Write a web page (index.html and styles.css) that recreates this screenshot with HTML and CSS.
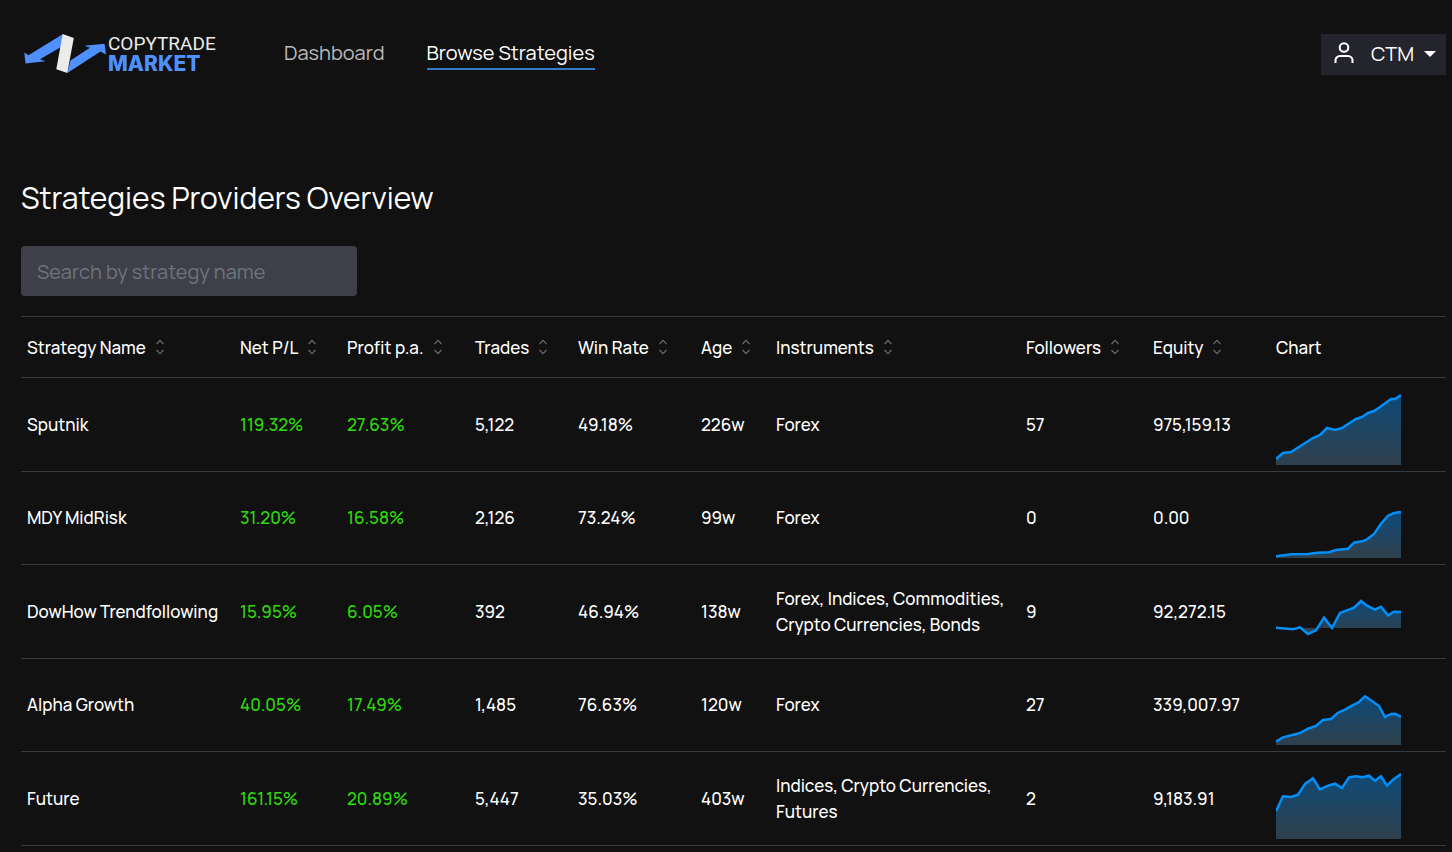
FILE: index.html
```
<!DOCTYPE html>
<html lang="en">
<head>
    <meta charset="UTF-8">
    <meta name="viewport" content="width=device-width, initial-scale=1.0">
    <title>Copytrade Market - Browse Strategies</title>
    <link rel="stylesheet" href="styles.css">
</head>
<body>
    <!-- shared icons and chart gradient -->
    <svg class="defs" width="0" height="0" aria-hidden="true">
        <defs>
            <linearGradient id="fill" x1="0" y1="0" x2="0" y2="1">
                <stop offset="0" stop-color="#0e4a78"/>
                <stop offset="1" stop-color="#30404c"/>
            </linearGradient>
            <symbol id="sort" viewBox="0 0 10 16">
                <path d="M1.5 5 5 1.3 8.5 5M1.5 11 5 14.7 8.5 11" fill="none" stroke="#6b6b6b" stroke-width="1.2"/>
            </symbol>
        </defs>
    </svg>

    <header class="header">
        <a class="logo" href="#">
            <svg class="logo-mark" width="82" height="40" viewBox="0 0 82 40" aria-hidden="true">
                <path d="M39 0 4.500 21.300 0.300 18.500 1.500 29.500 21.500 27.200 16 25.200 37 13Z" fill="#4d90fe"/>
                <path d="M43.300 39 46.500 26.500 66 13.700 60.500 11.800 80.500 9.800 82 20.500 76.500 17.600Z" fill="#4d90fe"/>
                <path d="M38.700 0 49.800 4 43.300 39 32.300 35.300Z" fill="#ebebeb"/>
            </svg>
            <span class="logo-text">
                <span class="logo-top">COPYTRADE</span>
                <span class="logo-bottom">MARKET</span>
            </span>
        </a>
        <nav class="nav">
            <a href="#">Dashboard</a>
            <a href="#" class="active">Browse Strategies</a>
        </nav>
        <button class="user-menu" type="button">
            <svg width="22" height="24" viewBox="0 0 22 24" fill="none" stroke="#fff" stroke-width="2" aria-hidden="true">
                <circle cx="11" cy="5.500" r="4.300"/>
                <path d="M2.500 21v-2.500a4.500 4.500 0 0 1 4.500-4.500h8a4.500 4.500 0 0 1 4.500 4.500V21"/>
            </svg>
            <span>CTM</span>
            <svg width="12" height="6" viewBox="0 0 12 6" aria-hidden="true"><path d="M0 0h12L6 6Z" fill="#fff"/></svg>
        </button>
    </header>

    <main class="content">
        <h1>Strategies Providers Overview</h1>
        <input class="search" type="text" placeholder="Search by strategy name" aria-label="Search by strategy name">

        <table class="strategies">
            <colgroup>
                <col class="col-name">
                <col class="col-net">
                <col class="col-profit">
                <col class="col-trades">
                <col class="col-win">
                <col class="col-age">
                <col class="col-instruments">
                <col class="col-followers">
                <col class="col-equity">
                <col>
            </colgroup>
            <thead>
                <tr>
                    <th><button type="button">Strategy Name<svg><use href="#sort"/></svg></button></th>
                    <th><button type="button">Net P/L<svg><use href="#sort"/></svg></button></th>
                    <th><button type="button">Profit p.a.<svg><use href="#sort"/></svg></button></th>
                    <th><button type="button">Trades<svg><use href="#sort"/></svg></button></th>
                    <th><button type="button">Win Rate<svg><use href="#sort"/></svg></button></th>
                    <th><button type="button">Age<svg><use href="#sort"/></svg></button></th>
                    <th><button type="button">Instruments<svg><use href="#sort"/></svg></button></th>
                    <th><button type="button">Followers<svg><use href="#sort"/></svg></button></th>
                    <th><button type="button">Equity<svg><use href="#sort"/></svg></button></th>
                    <th>Chart</th>
                </tr>
            </thead>
            <tbody>
                <tr>
                    <td>Sputnik</td>
                    <td class="up">119.32%</td>
                    <td class="up">27.63%</td>
                    <td>5,122</td>
                    <td>49.18%</td>
                    <td>226w</td>
                    <td>Forex</td>
                    <td>57</td>
                    <td>975,159.13</td>
                    <td>
                        <svg class="chart" viewBox="0 0 125 80">
                            <path class="area" d="M0 74 7 68 15 67 37 53 44 50 51 43 59 45 66 43 80 34 86 32 92 28 98 26 104 22 115 14 119 14 125 10V80H0Z"/>
                            <polyline points="0,74 7,68 15,67 37,53 44,50 51,43 59,45 66,43 80,34 86,32 92,28 98,26 104,22 115,14 119,14 125,10"/>
                        </svg>
                    </td>
                </tr>
                <tr>
                    <td>MDY MidRisk</td>
                    <td class="up">31.20%</td>
                    <td class="up">16.58%</td>
                    <td>2,126</td>
                    <td>73.24%</td>
                    <td>99w</td>
                    <td>Forex</td>
                    <td>0</td>
                    <td>0.00</td>
                    <td>
                        <svg class="chart" viewBox="0 0 125 80">
                            <path class="area" d="M0 78.300 15 76.200 32 76 42 74.700 53 74.300 60 72 72 70.700 78 64.700 86 63.300 91 61.300 98 56 105 45.700 112 37.700 118 35 125 34V80H0Z"/>
                            <polyline points="0,78.3 15,76.2 32,76 42,74.7 53,74.3 60,72 72,70.7 78,64.7 86,63.3 91,61.3 98,56 105,45.7 112,37.7 118,35 125,34"/>
                        </svg>
                    </td>
                </tr>
                <tr>
                    <td>DowHow Trendfollowing</td>
                    <td class="up">15.95%</td>
                    <td class="up">6.05%</td>
                    <td>392</td>
                    <td>46.94%</td>
                    <td>138w</td>
                    <td>Forex, Indices, Commodities, Crypto Currencies, Bonds</td>
                    <td>9</td>
                    <td>92,272.15</td>
                    <td>
                        <svg class="chart" viewBox="0 0 125 80">
                            <path class="area" d="M0 55.700 17 57.300 24 55.300 32 62 40 58.300 48 45.700 56 56 64 41 71 38.300 78 35.700 85 29 91 33.700 99 37.700 105 34.700 112 43.300 118 39.700 125 40V56H0Z"/>
                            <polyline points="0,55.7 17,57.3 24,55.3 32,62 40,58.3 48,45.7 56,56 64,41 71,38.3 78,35.7 85,29 91,33.7 99,37.7 105,34.7 112,43.3 118,39.7 125,40"/>
                        </svg>
                    </td>
                </tr>
                <tr>
                    <td>Alpha Growth</td>
                    <td class="up">40.05%</td>
                    <td class="up">17.49%</td>
                    <td>1,485</td>
                    <td>76.63%</td>
                    <td>120w</td>
                    <td>Forex</td>
                    <td>27</td>
                    <td>339,007.97</td>
                    <td>
                        <svg class="chart" viewBox="0 0 125 80">
                            <path class="area" d="M0 76.700 7 72.300 24 68 32 63.700 40 61 47 55 55 54 62 47.700 69 44.700 76 40.700 83 37 89 31.300 96 36 103 41 109 52 115 49 119 48.700 125 51.700V80H0Z"/>
                            <polyline points="0,76.7 7,72.3 24,68 32,63.7 40,61 47,55 55,54 62,47.7 69,44.7 76,40.7 83,37 89,31.3 96,36 103,41 109,52 115,49 119,48.7 125,51.7"/>
                        </svg>
                    </td>
                </tr>
                <tr>
                    <td>Future</td>
                    <td class="up">161.15%</td>
                    <td class="up">20.89%</td>
                    <td>5,447</td>
                    <td>35.03%</td>
                    <td>403w</td>
                    <td>Indices, Crypto Currencies, Futures</td>
                    <td>2</td>
                    <td>9,183.91</td>
                    <td>
                        <svg class="chart" viewBox="0 0 125 80">
                            <path class="area" d="M0 52.300 7 37.300 15 38 22 35.700 29 25 37 19.300 44 30.300 52 26.700 59 24.700 66 29 73 18.300 80 17.300 87 18.300 93 16.700 99 21.700 105 17.300 111 26.700 117 20.700 125 15V80H0Z"/>
                            <polyline points="0,52.3 7,37.3 15,38 22,35.7 29,25 37,19.3 44,30.3 52,26.7 59,24.7 66,29 73,18.3 80,17.3 87,18.3 93,16.7 99,21.7 105,17.3 111,26.7 117,20.7 125,15"/>
                        </svg>
                    </td>
                </tr>
            </tbody>
        </table>
    </main>
</body>
</html>
```
FILE: styles.css
```
* {
    box-sizing: border-box;
}
body {
    margin: 0;
    background-color: #111;
    color: #fff;
    font-family: Manrope, Inter, sans-serif;
    font-size: 17px;
    line-height: 26px;
}
button, input {
    font: inherit;
    color: inherit;
    border: none;
}
button {
    background: none;
    cursor: pointer;
}
.defs {
    position: absolute;
}
.header {
    display: flex;
    align-items: center;
    height: 108px;
    padding: 0 6px 0 24px;
}
.logo {
    display: flex;
    align-items: center;
    gap: 2px;
    width: 260px;
    color: #ebebeb;
    text-decoration: none;
}
.logo-text {
    display: flex;
    flex-direction: column;
    font-family: Roboto, sans-serif;
    font-size: 19px;
    line-height: 20px;
}
.logo-bottom {
    color: #4d90fe;
    font-family: Inter, sans-serif;
    font-size: 21px;
    font-weight: 800;
}
.nav {
    display: flex;
    gap: 42px;
    font-size: 20px;
}
.nav a {
    padding: 2px 0;
    border-bottom: 2px solid transparent;
    color: #bbb;
    text-decoration: none;
}
.nav a.active {
    color: #fff;
    border-color: #3478c9;
}
.user-menu {
    display: flex;
    align-items: center;
    gap: 10px;
    height: 41px;
    margin-left: auto;
    padding: 0 10px 0 12px;
    background-color: #24242d;
    font-size: 20px;
}
.user-menu span {
    padding-left: 6px;
}
.content {
    padding: 70px 6px 0 21px;
}
h1 {
    margin: 0 0 28px;
    font-size: 30px;
    line-height: 40px;
    font-weight: 400;
}
.search {
    display: block;
    width: 336px;
    height: 50px;
    margin-bottom: 20px;
    padding: 0 16px;
    border-radius: 4px;
    background-color: #3f3f49;
    font-size: 20px;
}
.search::placeholder {
    color: #6c757d;
    opacity: 1;
}
.strategies {
    width: 100%;
    table-layout: fixed;
    border-spacing: 0;
    border-top: 1px solid #373b3e;
}
.strategies th,
.strategies td {
    padding: 0 6px;
    border-bottom: 1px solid #373b3e;
    text-align: left;
    vertical-align: middle;
    font-weight: 500;
}
.strategies th {
    height: 61px;
    padding-top: 2px;
    white-space: nowrap;
}
.strategies th button {
    display: flex;
    align-items: center;
    gap: 9px;
    padding: 0;
}
.strategies th svg {
    width: 10px;
    height: 16px;
    margin-bottom: 2px;
}
.strategies td {
    height: 94px;
}
.strategies tr:nth-child(even) td {
    height: 93px;
}
.strategies td:first-child {
    white-space: nowrap;
}
.strategies .up {
    color: #2ddb0b;
}
.col-name { width: 213px; }
.col-net { width: 107px; }
.col-profit { width: 128px; }
.col-trades { width: 103px; }
.col-win { width: 123px; }
.col-age { width: 75px; }
.col-instruments { width: 250px; }
.col-followers { width: 127px; }
.col-equity { width: 123px; }
.chart {
    display: block;
    width: 125px;
    height: 80px;
}
.chart .area {
    fill: url(#fill);
}
.chart polyline {
    fill: none;
    stroke: #008ffb;
    stroke-width: 2.5;
}
```
